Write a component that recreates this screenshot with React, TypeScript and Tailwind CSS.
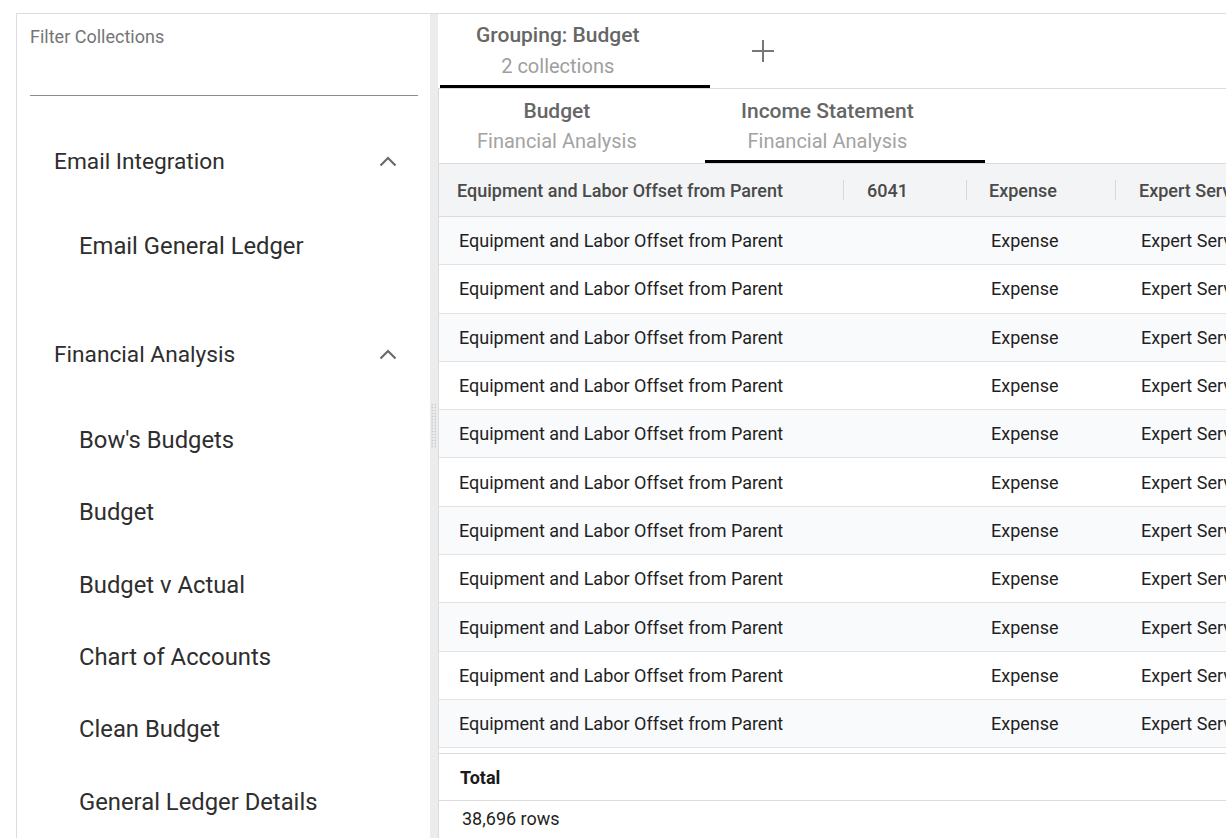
import React from "react";

const subItems1 = ["Email General Ledger"];
const subItems2 = [
  "Bow's Budgets",
  "Budget",
  "Budget v Actual",
  "Chart of Accounts",
  "Clean Budget",
  "General Ledger Details",
];

function Chevron() {
  return (
    <svg width="20" height="12" viewBox="0 0 20 12" className="mr-[20px] shrink-0">
      <polyline points="2.5,9.5 10,2 17.5,9.5" fill="none" stroke="#6b6b6b" strokeWidth="2.2" />
    </svg>
  );
}

function Group({ title, items }: { title: string; items: string[] }) {
  return (
    <div>
      <div className="h-[72px] flex items-center justify-between pl-[24px] text-[22.7px] text-[#2e2e2e]">
        <span>{title}</span>
        <Chevron />
      </div>
      <div className="pt-[13px] pb-[36px]">
        {items.map((it) => (
          <div key={it} className="h-[72.4px] flex items-center pl-[49px] text-[23.8px] text-[#2e2e2e]">
            {it}
          </div>
        ))}
      </div>
    </div>
  );
}

function Dots() {
  const ys = Array.from({ length: 15 }, (_, i) => 1.5 + i * 3);
  return (
    <svg width="6" height="46" viewBox="0 0 6 46">
      {ys.map((y) => (
        <g key={y}>
          <rect x="0.5" y={y - 0.75} width="1.5" height="1.5" fill="#c9c9c9" />
          <rect x="3.5" y={y - 0.75} width="1.5" height="1.5" fill="#c9c9c9" />
        </g>
      ))}
    </svg>
  );
}

const rows = Array.from({ length: 11 }, (_, i) => i);

export default function App() {
  return (
    <div className="w-[1226px] h-[838px] overflow-hidden bg-white pt-[13px] pl-[16px] font-['Roboto',sans-serif]">
      <div className="flex h-[825px] border-t border-l border-[#dcdcdc]">
        {/* Sidebar */}
        <div className="w-[413px] shrink-0 pl-[13px] pr-[12px] pt-[13px]">
          <div className="h-[69px] border-b border-[#8c8c8c]">
            <div className="text-[18px] leading-[20px] text-[#757575]">Filter Collections</div>
          </div>
          <div className="mt-[30px]">
            <Group title="Email Integration" items={subItems1} />
            <Group title="Financial Analysis" items={subItems2} />
          </div>
        </div>

        {/* Gutter */}
        <div className="w-[8px] shrink-0 bg-[#ececec] flex items-center justify-center">
          <Dots />
        </div>

        {/* Right column */}
        <div className="flex-1 min-w-0 flex flex-col">
          <div className="h-[74px] flex shrink-0">
            <div className="ml-[2px] w-[270px] border-b-[3px] border-black pl-[36px] pt-[9px]">
              <div className="inline-flex flex-col items-center">
                <div className="text-[21px] leading-[24px] font-medium text-[#666666]">Grouping: Budget</div>
                <div className="mt-[7px] text-[20px] leading-[24px] text-[#9e9e9e]">2 collections</div>
              </div>
            </div>
            <div className="w-[106px] flex items-center justify-center">
              <svg width="22" height="22" viewBox="0 0 22 22">
                <line x1="11" y1="0" x2="11" y2="22" stroke="#777777" strokeWidth="2" />
                <line x1="0" y1="11" x2="22" y2="11" stroke="#777777" strokeWidth="2" />
              </svg>
            </div>
          </div>

          <div className="flex-1 min-h-0 border-t border-l border-[#dcdcdc] flex flex-col overflow-hidden">
            {/* Inner tabs */}
            <div className="h-[75px] shrink-0 flex border-b border-[#dcdcdc]">
              <div className="w-[266px] pl-[38px] pt-[10px]">
                <div className="inline-flex flex-col items-center">
                  <div className="text-[21px] leading-[24px] font-medium text-[#666666]">Budget</div>
                  <div className="mt-[6px] text-[20px] leading-[24px] text-[#a3a3a3]">Financial Analysis</div>
                </div>
              </div>
              <div className="w-[280px] pl-[36px] pt-[10px] border-b-[3px] border-black">
                <div className="inline-flex flex-col items-center">
                  <div className="text-[21px] leading-[24px] font-medium text-[#666666]">Income Statement</div>
                  <div className="mt-[6px] text-[20px] leading-[24px] text-[#a3a3a3]">Financial Analysis</div>
                </div>
              </div>
            </div>

            {/* Table header */}
            <div className="h-[53px] shrink-0 flex bg-[#f3f4f6] border-b border-[#dcdcdc] text-[18px] font-medium text-[#4a4a4a] whitespace-nowrap overflow-hidden">
              <div className="w-[404px] shrink-0 flex items-center pl-[18px]">Equipment and Labor Offset from Parent</div>
              <div className="w-[123px] shrink-0 flex items-center">
                <span className="w-px h-[20px] bg-[#d8d8d8]" />
                <span className="ml-[23px]">6041</span>
              </div>
              <div className="w-[149px] shrink-0 flex items-center">
                <span className="w-px h-[20px] bg-[#d8d8d8]" />
                <span className="ml-[22px]">Expense</span>
              </div>
              <div className="flex-1 flex items-center">
                <span className="w-px h-[20px] bg-[#d8d8d8]" />
                <span className="ml-[23px]">Expert Services</span>
              </div>
            </div>

            {/* Body */}
            {rows.map((i) => (
              <div
                key={i}
                className={`h-[48.3px] shrink-0 flex items-center border-b border-[#e2e2e2] text-[18px] text-[#1f1f1f] whitespace-nowrap overflow-hidden ${
                  i % 2 === 0 ? "bg-[#f9fafc]" : "bg-white"
                }`}
              >
                <div className="w-[404px] shrink-0 pl-[20px]">Equipment and Labor Offset from Parent</div>
                <div className="w-[123px] shrink-0" />
                <div className="w-[149px] shrink-0 pl-[25px]">Expense</div>
                <div className="flex-1 pl-[26px]">Expert Services</div>
              </div>
            ))}

            <div className="h-[5px] shrink-0" />
            <div className="h-[48px] shrink-0 flex items-center border-t border-b border-[#dcdcdc] pl-[21px] text-[18px] font-bold text-[#1a1a1a]">
              Total
            </div>
            <div className="pl-[23px] pt-[8px] text-[18px] leading-[20px] text-[#1f1f1f]">38,696 rows</div>
          </div>
        </div>
      </div>
    </div>
  );
}
